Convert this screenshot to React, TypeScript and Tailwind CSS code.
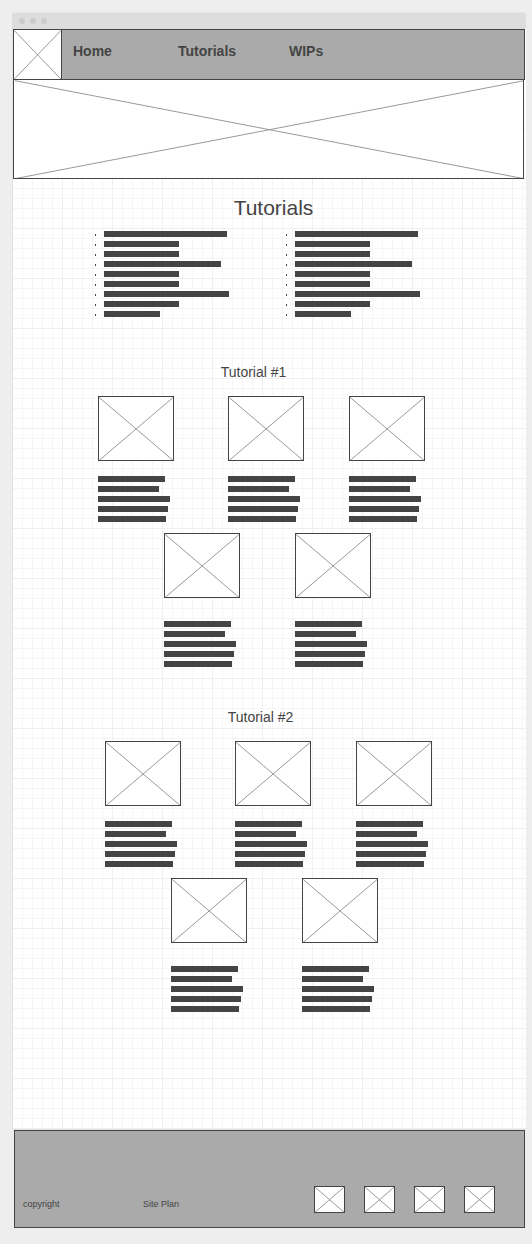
type PlaceholderProps = { className: string; label: string };

function Placeholder({ className, label }: PlaceholderProps) {
  return (
    <div className={`border border-[#444444] bg-white ${className}`}>
      <svg
        role="img"
        aria-label={label}
        className="block h-full w-full"
        viewBox="0 0 100 100"
        preserveAspectRatio="none"
      >
        <path
          d="M0.2 0.7 L100.2 100.7 M100.2 0.7 L0.2 100.7"
          fill="none"
          stroke="#999999"
          strokeWidth="1"
          vectorEffect="non-scaling-stroke"
        />
      </svg>
    </div>
  );
}

const listBars = [
  'w-[123px]',
  'w-[75px]',
  'w-[75px]',
  'w-[117px]',
  'w-[75px]',
  'w-[75px]',
  'w-[125px]',
  'w-[75px]',
  'w-[56px]',
];

const textBars = ['w-[67px]', 'w-[61px]', 'w-[72px]', 'w-[70px]', 'w-[68px]'];

function BulletList() {
  return (
    <ul className="flex w-[134px] flex-col gap-1">
      {listBars.map((width, i) => (
        <li key={i} className="flex items-end gap-2">
          <span className="mb-px h-[2px] w-px bg-[#444444]" />
          <span className={`h-[6px] bg-[#444444] ${width}`} />
        </li>
      ))}
    </ul>
  );
}

function Step({ gap }: { gap: string }) {
  return (
    <article className={`flex w-[76px] flex-col ${gap}`}>
      <Placeholder className="h-[65px]" label="Step image" />
      <div className="flex flex-col gap-1">
        {textBars.map((width, i) => (
          <span key={i} className={`h-[6px] bg-[#444444] ${width}`} />
        ))}
      </div>
    </article>
  );
}

function Tutorial({ title, className }: { title: string; className: string }) {
  return (
    <section className={className}>
      <h2 className="pr-8 text-center text-[14px] leading-5">{title}</h2>
      <div className="mt-[14px] flex justify-center pr-4">
        <div className="grid grid-cols-[130px_121px_76px]">
          <Step gap="gap-[15px]" />
          <Step gap="gap-[15px]" />
          <Step gap="gap-[15px]" />
        </div>
      </div>
      <div className="mt-[11px] flex justify-center pr-1">
        <div className="grid grid-cols-[131px_76px]">
          <Step gap="gap-[23px]" />
          <Step gap="gap-[23px]" />
        </div>
      </div>
    </section>
  );
}

const gridPaper =
  'bg-[linear-gradient(to_right,#efefef_1px,transparent_1px),linear-gradient(to_bottom,#efefef_1px,transparent_1px),linear-gradient(to_right,#f5f5f5_1px,transparent_1px),linear-gradient(to_bottom,#f5f5f5_1px,transparent_1px)] bg-[length:50px_50px,50px_50px,10px_10px,10px_10px] bg-[position:-1px_-1px]';

export default function App() {
  return (
    <div className="min-h-screen bg-[#eeeeee] pt-3 pr-[6px] pb-4 pl-3 font-['Liberation_Sans',Arial,sans-serif] text-[#444444]">
      <div className="flex h-[17px] items-center gap-[5px] rounded-t-[3px] border-t border-[#e6e6e6] bg-[#dddddd] pl-[7px]">
        <span className="size-[6px] rounded-full bg-[#cccccc]" />
        <span className="size-[6px] rounded-full bg-[#cccccc]" />
        <span className="size-[6px] rounded-full bg-[#cccccc]" />
      </div>

      <div className={`border-b border-l border-[#e2e2e2] bg-white ${gridPaper}`}>
        <header className="mr-px flex h-[51px] border border-l-0 border-[#444444] bg-[#aaaaaa]">
          <Placeholder className="-my-px w-[49px]" label="Logo" />
          <nav className="grid grid-cols-[105px_111px_auto] pt-[11px] pl-[11px] text-[14px] leading-5 font-bold">
            <a href="#home">Home</a>
            <a href="#tutorials">Tutorials</a>
            <a href="#wips">WIPs</a>
          </nav>
        </header>
        <Placeholder className="mr-[2px] h-[99px] border-t-0" label="Banner" />

        <main className="pt-[17px] pb-[117px]">
          <h1 className="pl-2 text-center text-[21px] leading-6">Tutorials</h1>
          <div className="mt-[11px] flex justify-center gap-[57px] pr-6">
            <BulletList />
            <BulletList />
          </div>
          <Tutorial title="Tutorial #1" className="mt-[45px]" />
          <Tutorial title="Tutorial #2" className="mt-10 pl-[14px]" />
        </main>
      </div>

      <footer className="mr-px ml-[2px] flex h-[98px] items-end justify-between border border-[#444444] bg-[#aaaaaa] pr-[29px] pb-[14px] pl-[8px]">
        <div className="grid grid-cols-[120px_auto] text-[9px] leading-[18px]">
          <p>copyright</p>
          <a href="#site-plan">Site Plan</a>
        </div>
        <div className="flex gap-[19px]">
          <Placeholder className="h-[27px] w-[31px]" label="Social link 1" />
          <Placeholder className="h-[27px] w-[31px]" label="Social link 2" />
          <Placeholder className="h-[27px] w-[31px]" label="Social link 3" />
          <Placeholder className="h-[27px] w-[31px]" label="Social link 4" />
        </div>
      </footer>
    </div>
  );
}
